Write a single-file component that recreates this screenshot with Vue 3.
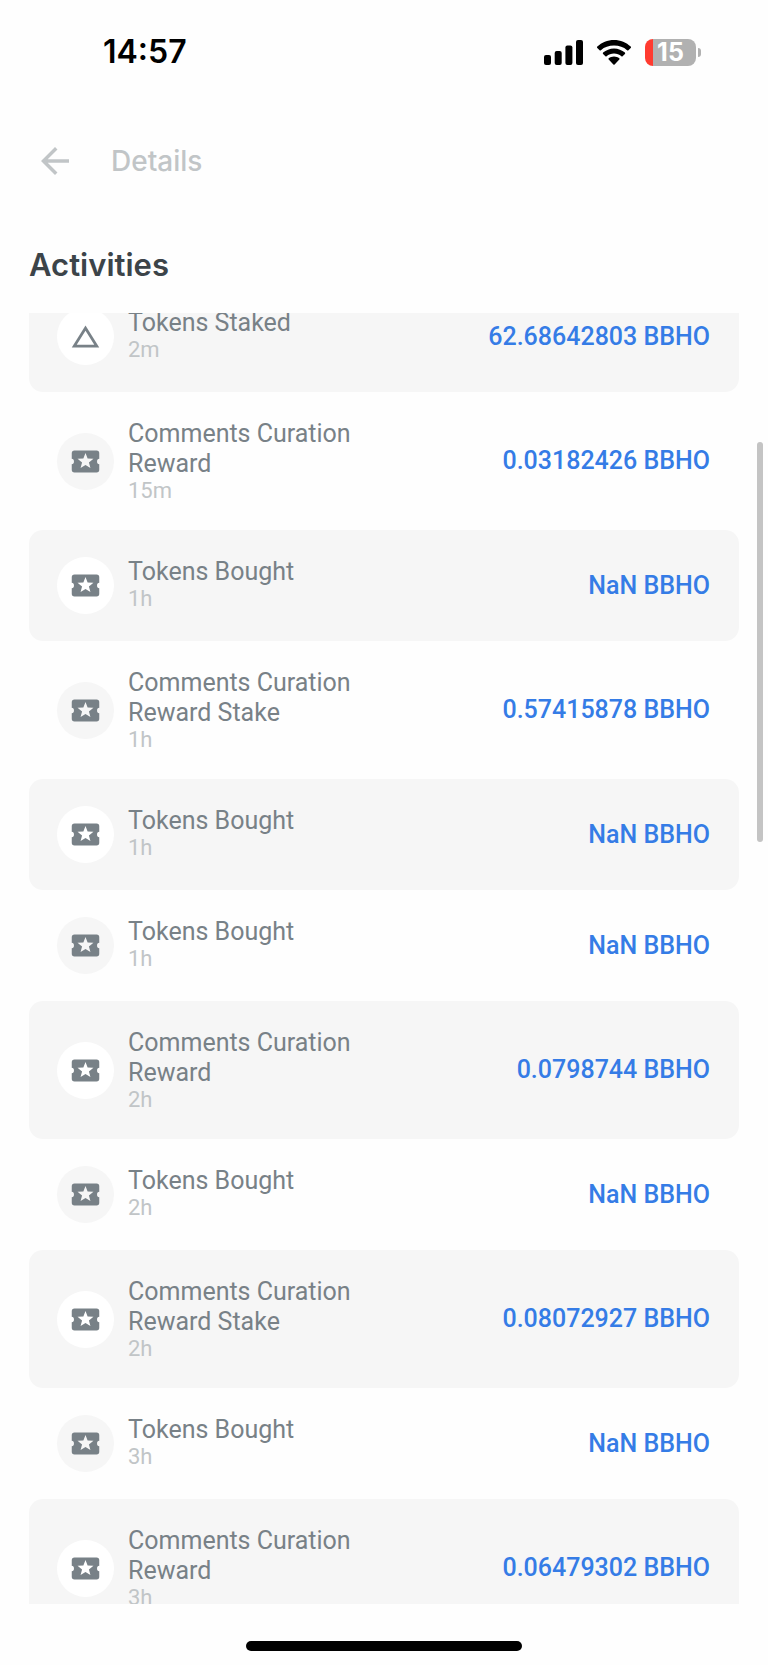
<script setup>
const activities = [
  { title: 'Tokens Staked', time: '2m', amount: '62.68642803 BBHO', icon: 'stake' },
  { title: 'Comments Curation Reward', time: '15m', amount: '0.03182426 BBHO', icon: 'ticket' },
  { title: 'Tokens Bought', time: '1h', amount: 'NaN BBHO', icon: 'ticket' },
  { title: 'Comments Curation Reward Stake', time: '1h', amount: '0.57415878 BBHO', icon: 'ticket' },
  { title: 'Tokens Bought', time: '1h', amount: 'NaN BBHO', icon: 'ticket' },
  { title: 'Tokens Bought', time: '1h', amount: 'NaN BBHO', icon: 'ticket' },
  { title: 'Comments Curation Reward', time: '2h', amount: '0.0798744 BBHO', icon: 'ticket' },
  { title: 'Tokens Bought', time: '2h', amount: 'NaN BBHO', icon: 'ticket' },
  { title: 'Comments Curation Reward Stake', time: '2h', amount: '0.08072927 BBHO', icon: 'ticket' },
  { title: 'Tokens Bought', time: '3h', amount: 'NaN BBHO', icon: 'ticket' },
  { title: 'Comments Curation Reward', time: '3h', amount: '0.06479302 BBHO', icon: 'ticket' },
]
</script>

<template>
  <div class="screen">
    <div class="status-bar">
      <time class="clock">14:57</time>
      <div class="indicators">
        <svg class="signal" viewBox="0 0 39 25" aria-label="Signal">
          <rect x="0" y="15" width="7" height="10" rx="2" />
          <rect x="10.7" y="11" width="7" height="14" rx="2" />
          <rect x="21.4" y="5.5" width="7" height="19.5" rx="2" />
          <rect x="32" y="0" width="7" height="25" rx="2" />
        </svg>
        <svg class="wifi" viewBox="0 0 34 25" aria-label="Wi-Fi">
          <path d="M17 0C10.5 0 4.600 2.500 0.300 6.600a.9.9 0 0 0 0 1.300l2.300 2.300a.9.9 0 0 0 1.300 0C7.400 7.200 11.900 5.600 17 5.600s9.600 1.600 13.100 4.600a.9.9 0 0 0 1.300 0l2.300-2.300a.9.9 0 0 0 0-1.300C29.400 2.500 23.500 0 17 0z" />
          <path d="M17 8.400c-4.200 0-8 1.600-10.900 4.200a.9.9 0 0 0 0 1.300l2.300 2.300a.9.9 0 0 0 1.200 0c2-1.700 4.600-2.600 7.400-2.600s5.400.9 7.400 2.600a.9.9 0 0 0 1.200 0l2.300-2.300a.9.9 0 0 0 0-1.300C25 10 21.200 8.400 17 8.400z" />
          <path d="M17 16.400c-2 0-3.900.7-5.300 1.900a.9.9 0 0 0 0 1.300l4.700 4.800a.9.9 0 0 0 1.200 0l4.700-4.800a.9.9 0 0 0 0-1.300c-1.400-1.200-3.300-1.900-5.300-1.900z" />
        </svg>
        <div class="battery">
          <span class="battery-body">15</span>
          <span class="battery-cap"></span>
        </div>
      </div>
    </div>

    <header class="nav">
      <button class="back" type="button" aria-label="Back">
        <svg viewBox="0 0 24 24"><path d="M20 11H7.830l5.590-5.590L12 4l-8 8 8 8 1.410-1.410L7.830 13H20v-2z" /></svg>
      </button>
      <span class="nav-title">Details</span>
    </header>

    <h1 class="heading">Activities</h1>

    <main class="viewport">
      <ul class="list">
        <li v-for="(item, i) in activities" :key="i" class="row">
          <span class="badge">
            <svg v-if="item.icon === 'stake'" viewBox="0 0 24 24">
              <path d="M12 7.770 18.390 18H5.610L12 7.770M12 4 2 20h20L12 4z" />
            </svg>
            <svg v-else viewBox="0 0 24 24">
              <path d="M20.400 12a1.600 2 0 0 1 1.600-2V6a2 2 0 0 0-2-2H4a2 2 0 0 0-2 2v4a1.600 2 0 0 1 0 4v4a2 2 0 0 0 2 2h16a2 2 0 0 0 2-2v-4a1.600 2 0 0 1-1.600-2zm-4.820 4.800L12 14.500l-3.580 2.300 1.080-4.120-3.290-2.690 4.240-.25L12 5.800l1.540 3.950 4.240.25-3.290 2.690 1.090 4.110z" />
            </svg>
          </span>
          <div class="info">
            <span class="title">{{ item.title }}</span>
            <span class="time">{{ item.time }}</span>
          </div>
          <span class="amount">{{ item.amount }}</span>
        </li>
      </ul>
      <span class="scroll-thumb"></span>
    </main>

    <footer class="home"><span class="home-bar"></span></footer>
  </div>
</template>

<style>
body {
  background: #fefefe;
}
</style>

<style scoped>
.screen {
  display: flex;
  flex-direction: column;
  height: 100vh;
  background: #fefefe;
  font-family: Roboto, "Liberation Sans", sans-serif;
}

.status-bar {
  display: flex;
  justify-content: space-between;
  align-items: center;
  flex: none;
  height: 104px;
  padding: 0 67px 0 103px;
  color: #000;
}

.clock {
  font: 600 32px/40px Inter, sans-serif;
}

.indicators {
  display: flex;
  align-items: center;
  gap: 14px;
}

.signal {
  width: 39px;
  height: 25px;
}

.wifi {
  width: 34px;
  height: 25px;
}

.battery {
  display: flex;
  align-items: center;
  gap: 2px;
}

.battery-body {
  width: 51px;
  height: 27px;
  box-sizing: border-box;
  border-radius: 8px;
  background: linear-gradient(90deg, #ff3b30 8px, #b1b1b1 8px);
  color: #fff;
  font: 700 25px/27px Inter, sans-serif;
  text-align: center;
}

.battery-cap {
  width: 3px;
  height: 9px;
  border-radius: 0 4px 4px 0;
  background: #b1b1b1;
}

.nav {
  display: flex;
  align-items: center;
  flex: none;
  gap: 35px;
  height: 114px;
  padding: 0 34px;
}

.back {
  display: flex;
  padding: 0;
  border: 0;
  background: none;
}

.back svg {
  width: 42px;
  height: 42px;
  fill: #c1c5c7;
}

.nav-title {
  color: #c1c5c7;
  font: 500 28px/36px Inter, sans-serif;
}

.heading {
  flex: none;
  margin: 0;
  padding: 27px 29px 28px;
  color: #3c4449;
  font: 600 31px/40px Inter, sans-serif;
}

.viewport {
  position: relative;
  flex: 1;
  min-height: 0;
  padding: 0 29px;
  overflow: hidden;
}

.list {
  margin: -32px 0 0;
  padding: 0;
  list-style: none;
}

.row {
  display: flex;
  align-items: center;
  gap: 14px;
  padding: 27px 29px 27px 28px;
  border-radius: 14px;
}

.row:nth-child(odd) {
  background: #f6f6f6;
}

.badge {
  display: flex;
  align-items: center;
  justify-content: center;
  flex: none;
  width: 57px;
  height: 57px;
  border-radius: 50%;
  background: #f6f6f6;
}

.row:nth-child(odd) .badge {
  background: #fff;
}

.badge svg {
  width: 33px;
  height: 33px;
  fill: #788187;
}

.info {
  display: flex;
  flex-direction: column;
  flex: 1;
  align-self: flex-start;
}

.title {
  max-width: 240px;
  color: #788187;
  font-size: 25px;
  line-height: 30px;
}

.time {
  color: #c1c5c7;
  font-size: 22px;
  line-height: 24px;
}

.amount {
  color: #357ce6;
  font-size: 25px;
  font-weight: 500;
  line-height: 30px;
}

.scroll-thumb {
  position: absolute;
  top: 10%;
  right: 5px;
  width: 6px;
  height: 31%;
  border-radius: 3px;
  background: #c4c4c4;
}

.home {
  display: flex;
  justify-content: center;
  flex: none;
  padding: 37px 0 14px;
}

.home-bar {
  width: 36%;
  height: 10px;
  border-radius: 5px;
  background: #000;
}
</style>
